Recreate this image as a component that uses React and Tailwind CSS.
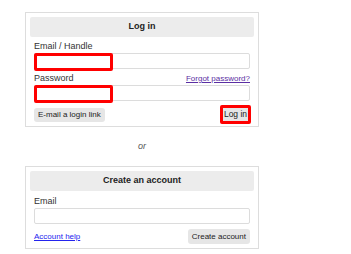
import React from 'react';

const font = { fontFamily: '"Liberation Sans", Arial, sans-serif' };

// Red annotation drawn over part of an input
const Marked = ({ children }) => (
  <div className="relative">
    {children}
    <div className="absolute left-0 top-0 w-[79px] h-[18px] border-[3px] border-[#f00] rounded-[2px]" />
  </div>
);

const Field = () => (
  <div className="h-[16px] w-full border border-[#dcdcdc] rounded-[2px] bg-white" />
);

const Header = ({ title }) => (
  <div className="h-[20px] bg-[#ececec] rounded-[2px] flex items-center justify-center text-[9px] font-bold text-[#222]">
    {title}
  </div>
);

export default function App() {
  return (
    <div className="w-[351px] h-[254px] bg-white pt-[12px] pl-[25px]" style={font}>
      {/* Log in box */}
      <div className="w-[234px] border border-[#dddddd] p-[4px] pb-[2px]">
        <Header title="Log in" />
        <div className="px-[4px]">
          <div className="mt-[3px] h-[12px] leading-[12px] text-[9px] text-[#333]">Email / Handle</div>
          <div className="mt-[1px]">
            <Marked><Field /></Marked>
          </div>
          <div className="mt-[3px] h-[12px] flex items-end justify-between">
            <span className="text-[9px] leading-[12px] text-[#333]">Password</span>
            <a className="text-[8px] leading-[10px] text-[#5b2fa3] underline">Forgot password?</a>
          </div>
          <div className="mt-[1px]">
            <Marked><Field /></Marked>
          </div>
          <div className="mt-[4px] flex items-center justify-between">
            <button className="h-[14px] px-[4px] bg-[#e6e6e6] rounded-[3px] text-[8px] text-[#222] leading-[14px]">
              E-mail a login link
            </button>
            <div className="border-[3px] border-[#f00] rounded-[2px] -mr-[1px]">
              <button className="block h-[13px] w-[25px] bg-[#e6e6e6] text-[8.5px] text-[#222] leading-[13px]">
                Log in
              </button>
            </div>
          </div>
        </div>
      </div>

      {/* or */}
      <div className="w-[234px] h-[39px] flex items-center justify-center text-[9px] italic text-[#555]">
        or
      </div>

      {/* Create account box */}
      <div className="w-[234px] border border-[#dddddd] p-[4px]">
        <Header title="Create an account" />
        <div className="px-[4px]">
          <div className="mt-[4px] h-[12px] leading-[12px] text-[9px] text-[#333]">Email</div>
          <div className="mt-[1px]">
            <Field />
          </div>
          <div className="mt-[5px] flex items-center justify-between">
            <a className="text-[8px] text-[#2424ee] underline">Account help</a>
            <button className="h-[15px] px-[4px] bg-[#e6e6e6] rounded-[3px] text-[8px] text-[#222] leading-[15px]">
              Create account
            </button>
          </div>
        </div>
      </div>
    </div>
  );
}
